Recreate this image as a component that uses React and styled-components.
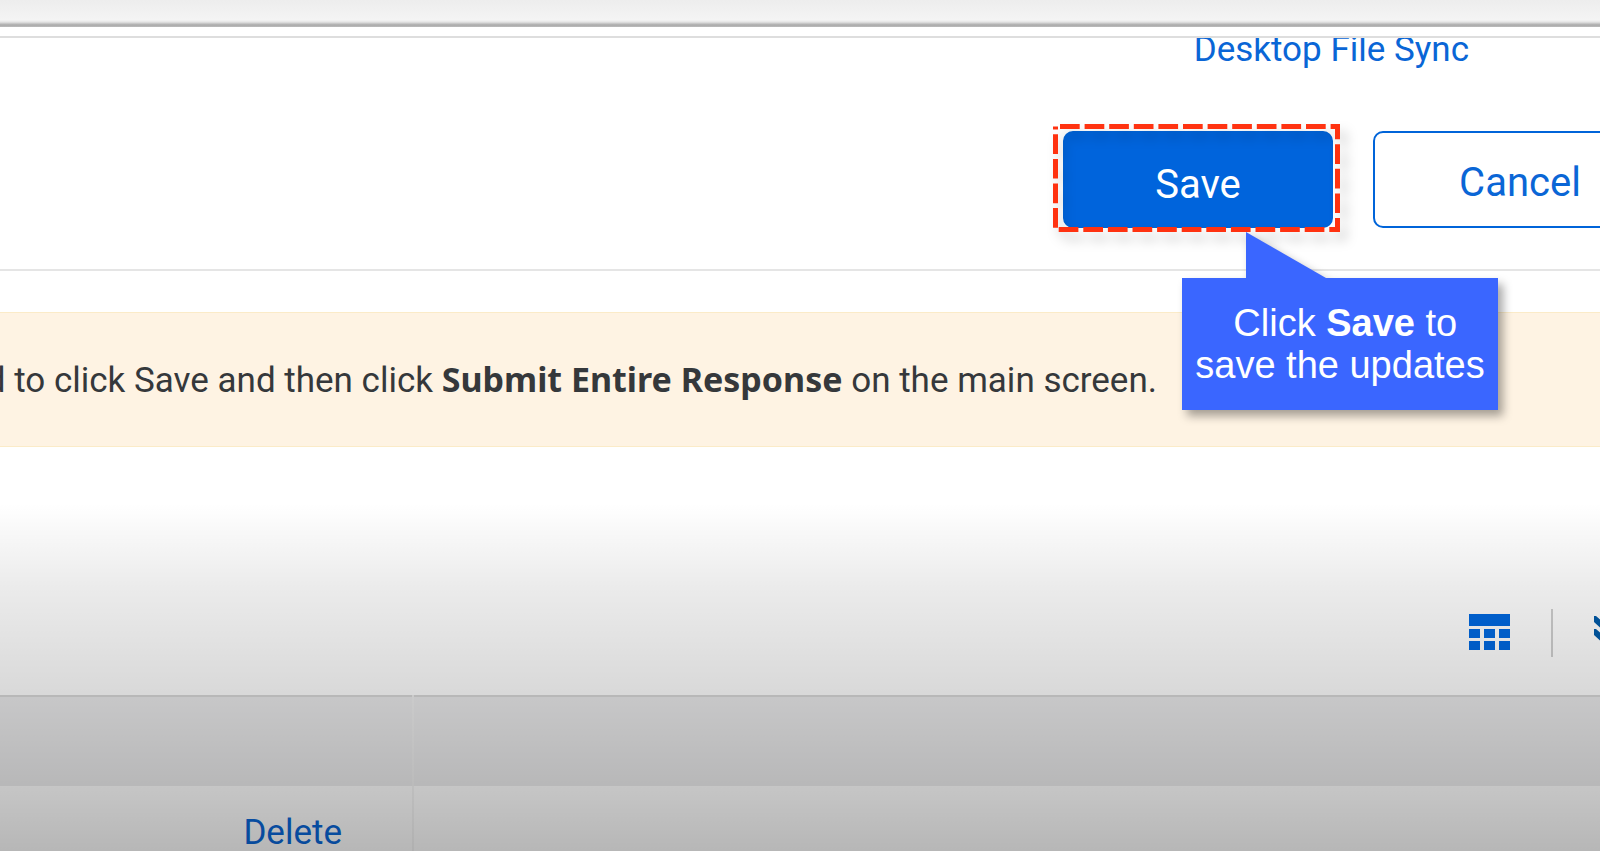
import React from 'react';
import styled, { createGlobalStyle } from 'styled-components';

const GlobalStyle = createGlobalStyle`
    *, *:before, *:after {
        box-sizing: border-box;
    }

    body {
        margin: 0;
        background: #fff;
        font-family: Roboto, "Liberation Sans", sans-serif;
    }
`;

const Page = styled.div`
    position: relative;
    display: flex;
    flex-direction: column;
    min-height: 100vh;
    overflow: hidden;
    background: #fff;
    color: #32363a;
    font-size: 35px;
    line-height: 40px;
`;

const TopBar = styled.div`
    height: 27px;
    flex: none;
    background: linear-gradient(#ededed, #f4f4f4 20px, #e4e4e4 22px, #a9a9a9 25px, #bcbcbc);
`;

const Header = styled.header`
    margin-top: 9px;
    border-top: 2px solid #dedede;
    border-bottom: 2px solid #e5e5e5;
    padding-bottom: 41px;
`;

const LinkRow = styled.nav`
    display: flex;
    justify-content: flex-end;
    align-items: flex-end;
    height: 32px;
    padding-right: 131px;
    margin-bottom: 61px;
    overflow: hidden;
`;

const TextLink = styled.a`
    color: #0a66d6;
    text-decoration: none;
    white-space: nowrap;
`;

const Actions = styled.div`
    display: flex;
    justify-content: flex-end;
    gap: 40px;
    margin-right: -67px;
`;

const Button = styled.button`
    width: ${props => props.$primary ? 270 : 294}px;
    height: 97px;
    border: 2px solid #0064d9;
    border-radius: 10px;
    background: ${props => props.$primary ? "#0064dc" : "#fff"};
    color: ${props => props.$primary ? "#fff" : "#0a66d6"};
    font-family: inherit;
    font-size: 40px;
    line-height: 48px;
    padding: ${props => props.$primary ? 10 : 6}px 0 0;
    cursor: pointer;
`;

const Highlighted = styled.div`
    position: relative;
    z-index: 2;

    .outline {
        position: absolute;
        top: -7px;
        left: -10px;
        overflow: visible;
        pointer-events: none;
        filter: drop-shadow(6px 8px 6px rgba(0, 0, 0, 0.2));
    }
`;

const Callout = styled.div`
    position: absolute;
    top: 147px;
    left: 119px;
    width: 316px;
    padding: 24px 0;
    background: #3a66ff;
    color: #fff;
    font-family: "Liberation Sans", Arial, sans-serif;
    font-size: 38px;
    line-height: 42px;
    text-align: center;
    white-space: nowrap;
    filter: drop-shadow(5px 6px 5px rgba(0, 0, 0, 0.35));

    p {
        margin: 0;
    }

    .tail {
        position: absolute;
        left: 64px;
        bottom: 100%;
        display: block;
    }
`;

const Notice = styled.div`
    display: flex;
    justify-content: flex-end;
    margin-top: 41px;
    padding: 48px 443px 45px 0;
    border-top: 1px solid #fbebc8;
    border-bottom: 1px solid #fbebc8;
    background: #fef3e3;
    color: #35383b;
    white-space: nowrap;

    p {
        margin: 0;
    }

    b {
        font-family: "Noto Sans", sans-serif;
        font-size: 34px;
        line-height: 1;
    }
`;

const Lower = styled.section`
    position: relative;
    display: flex;
    flex-direction: column;
    flex: 1;

    &:after {
        content: '';
        position: absolute;
        inset: 0;
        pointer-events: none;
        background: linear-gradient(
            rgba(0, 0, 0, 0) 56px,
            rgba(0, 0, 0, 0.08) 140px,
            rgba(0, 0, 0, 0.15) 245px,
            rgba(0, 0, 0, 0.22) 340px,
            rgba(0, 0, 0, 0.28) 404px
        );
    }
`;

const Toolbar = styled.div`
    display: flex;
    justify-content: flex-end;
    align-items: center;
    gap: 41px;
    padding: 162px 0 38px;
    margin-right: -18px;
`;

const IconButton = styled.button`
    display: flex;
    border: 0;
    padding: 0 0 2px;
    background: none;
    color: #0068e0;
    cursor: pointer;
`;

const Divider = styled.span`
    width: 2px;
    height: 48px;
    background: #cfcfcf;
`;

const Table = styled.table`
    width: 100%;
    table-layout: fixed;
    border-collapse: collapse;

    th, td {
        padding: 0 70px 0 0;
        text-align: right;
        font-weight: normal;
    }

    th {
        height: 90px;
        border-top: 2px solid #d9d9d9;
        background: #ebebec;
    }

    td {
        height: 94px;
        background: #fdfdfd;
    }

    th:first-child {
        width: 413px;
        border-right: 2px solid #efefef;
    }

    td:first-child {
        border-right: 2px solid #f3f3f3;
    }
`;

const TableClip = styled.div`
    height: 154px;
    overflow: hidden;
    flex: 1 0 auto;
`;

const TableIcon = () => (
    <svg width="41" height="36" viewBox="0 0 41 36" fill="currentColor" aria-hidden="true">
        <rect width="41" height="12" />
        {[15, 27].map(y => [0, 15, 30].map(x => <rect key={`${x}-${y}`} x={x} y={y} width="11" height="9" />))}
    </svg>
);

const ChevronsIcon = () => (
    <svg width="24" height="32" viewBox="0 0 24 32" fill="#005aa8" aria-hidden="true">
        <path d="M0 0 H2 L12 9 L22 0 H24 V6 L12 17 L0 6 Z M0 13 H2 L12 22 L22 13 H24 V19 L12 30 L0 19 Z" />
    </svg>
);

const App = () => (
    <Page>
        <GlobalStyle />
        <TopBar />
        <Header>
            <LinkRow>
                <TextLink href="#sync">Desktop File Sync</TextLink>
            </LinkRow>
            <Actions>
                <Highlighted>
                    <Button type="button" $primary>Save</Button>
                    <svg className="outline" width="287" height="109" viewBox="0 0 287 109" aria-hidden="true">
                        <path
                            d="M7 2.5 H284.5 V105.5 H2.5 V2.5"
                            fill="none"
                            stroke="#ff3210"
                            strokeWidth="5"
                            strokeDasharray="19.7 4.9"
                        />
                    </svg>
                    <Callout role="tooltip">
                        <svg className="tail" width="80" height="46" viewBox="0 0 80 46" aria-hidden="true">
                            <path d="M0 0 L80 46 H0 Z" fill="#3a66ff" />
                        </svg>
                        <p>&nbsp;Click <b>Save</b> to<br />save the updates</p>
                    </Callout>
                </Highlighted>
                <Button type="button">Cancel</Button>
            </Actions>
        </Header>
        <Notice>
            <p>d to click Save and then click <b>Submit Entire Response</b> on the main screen.</p>
        </Notice>
        <Lower>
            <Toolbar>
                <IconButton type="button" aria-label="Table view"><TableIcon /></IconButton>
                <Divider />
                <IconButton type="button" aria-label="Expand all"><ChevronsIcon /></IconButton>
            </Toolbar>
            <TableClip>
                <Table>
                    <thead>
                        <tr>
                            <th scope="col" />
                            <th scope="col" />
                        </tr>
                    </thead>
                    <tbody>
                        <tr>
                            <td><TextLink href="#delete">Delete</TextLink></td>
                            <td />
                        </tr>
                    </tbody>
                </Table>
            </TableClip>
        </Lower>
    </Page>
);

export default App;
